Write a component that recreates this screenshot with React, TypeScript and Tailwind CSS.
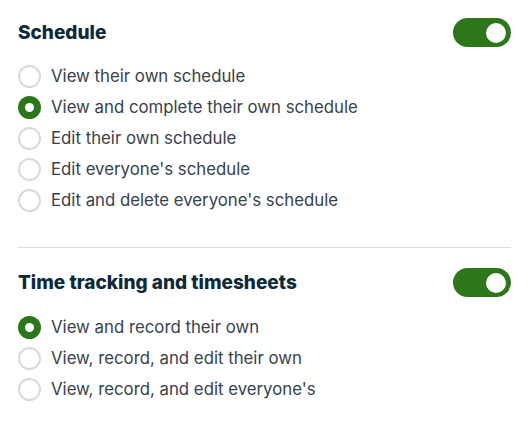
import React from "react";

function Radio({ checked, label }: { checked?: boolean; label: string }) {
  return (
    <div className="flex h-[31px] items-center">
      {checked ? (
        <span className="flex h-[23px] w-[23px] shrink-0 items-center justify-center rounded-full bg-[#2b7719]">
          <span className="h-[9px] w-[9px] rounded-full bg-white" />
        </span>
      ) : (
        <span className="h-[23px] w-[23px] shrink-0 rounded-full border-2 border-[#d4dcdd] bg-white" />
      )}
      <span className="ml-[10px] text-[16.8px] leading-none text-[#36424c]">{label}</span>
    </div>
  );
}

function Toggle() {
  return (
    <div className="flex h-[29px] w-[58px] items-center justify-end rounded-full bg-[#2b7719] pr-[5px]">
      <span className="h-[20px] w-[20px] rounded-full bg-white" />
    </div>
  );
}

export default function App() {
  return (
    <div
      className="min-h-[437px] w-[530px] bg-white pl-[18px] pr-[19px] pt-[18px]"
      style={{ fontFamily: "Inter, 'Noto Sans', sans-serif" }}
    >
      <div className="flex h-[29px] items-center justify-between">
        <h2 className="text-[19px] font-extrabold leading-none text-[#0c2a39]">Schedule</h2>
        <Toggle />
      </div>
      <div className="mt-[14px] flex flex-col">
        <Radio label="View their own schedule" />
        <Radio checked label="View and complete their own schedule" />
        <Radio label="Edit their own schedule" />
        <Radio label="Edit everyone's schedule" />
        <Radio label="Edit and delete everyone's schedule" />
      </div>
      <div className="mt-[31px] h-px bg-[#d8e0e1]" />
      <div className="mt-[20px] flex h-[29px] items-center justify-between">
        <h2 className="text-[19px] font-extrabold leading-none text-[#0c2a39]">Time tracking and timesheets</h2>
        <Toggle />
      </div>
      <div className="mt-[15px] flex flex-col">
        <Radio checked label="View and record their own" />
        <Radio label="View, record, and edit their own" />
        <Radio label="View, record, and edit everyone's" />
      </div>
    </div>
  );
}
